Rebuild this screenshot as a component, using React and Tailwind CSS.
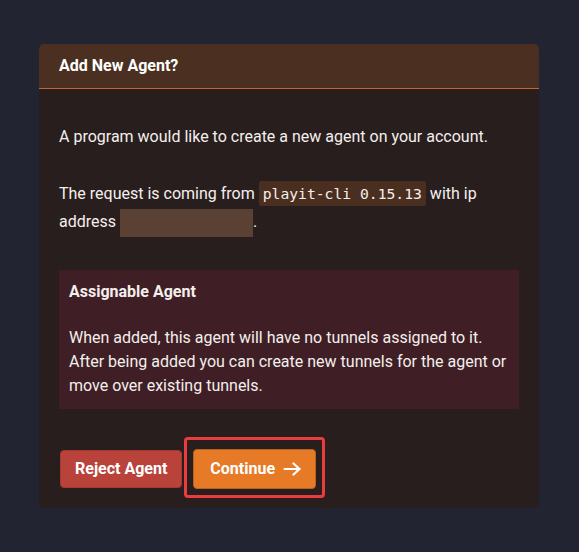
export default function App() {
  return (
    <div className="min-h-[552px] w-full bg-[#222531] pt-[44px] pb-[44px]" style={{ fontFamily: 'Roboto, "Liberation Sans", sans-serif' }}>
      <div className="ml-[39px] w-[500px] overflow-hidden rounded-[5px] bg-[#281e1e] text-[#f4efec]">
        <div className="flex h-[45px] items-center border-b border-[#c4652c] bg-[#4b2f21] px-5">
          <h2 className="text-base font-bold text-white">Add New Agent?</h2>
        </div>

        <div className="px-5 pt-[36px] pb-[19px] text-base">
          <p className="leading-6">A program would like to create a new agent on your account.</p>

          <p className="mt-[31px] leading-[28px]">
            The request is coming from{' '}
            <code className="rounded-[2px] bg-[#4a2e20] px-[4px] py-[4px] text-[14.7px]" style={{ fontFamily: '"DejaVu Sans Mono", monospace' }}>
              playit-cli 0.15.13
            </code>{' '}
            with ip address{' '}
            <span className="inline-block h-[28px] w-[133px] align-middle bg-[#5b4134]"></span>.
          </p>

          <div className="mt-[33px] bg-[#3f1f25] px-[10px] pt-[10px] pb-[11px]">
            <div className="font-bold leading-6">Assignable Agent</div>
            <p className="mt-[22px] leading-6">
              When added, this agent will have no tunnels assigned to it. After being added you can create new tunnels for the agent or move over existing tunnels.
            </p>
          </div>

          <div className="mt-[40px] flex items-center gap-[11px] pl-px">
            <button className="h-[38px] rounded-[4px] border border-[#a3392f] bg-[#b9423a] px-[14px] font-bold text-white">
              Reject Agent
            </button>
            <div className="relative">
              <button className="flex h-[40px] items-center gap-[8px] rounded-[4px] border border-[#b8621f] bg-[#e67a27] pl-[16px] pr-[14px] font-bold text-white">
                Continue
                <svg width="18" height="14" viewBox="0 0 18 14" fill="none" stroke="currentColor" strokeWidth="2.2" strokeLinecap="round" strokeLinejoin="round">
                  <path d="M1.5 7h15" />
                  <path d="M10.5 1.5 16.5 7l-6 5.5" />
                </svg>
              </button>
              <div className="pointer-events-none absolute -top-[12px] -bottom-[9px] -left-[9px] -right-[9px] rounded-[4px] border-[3px] border-[#ea3b3e]"></div>
            </div>
          </div>
        </div>
      </div>
    </div>
  );
}
